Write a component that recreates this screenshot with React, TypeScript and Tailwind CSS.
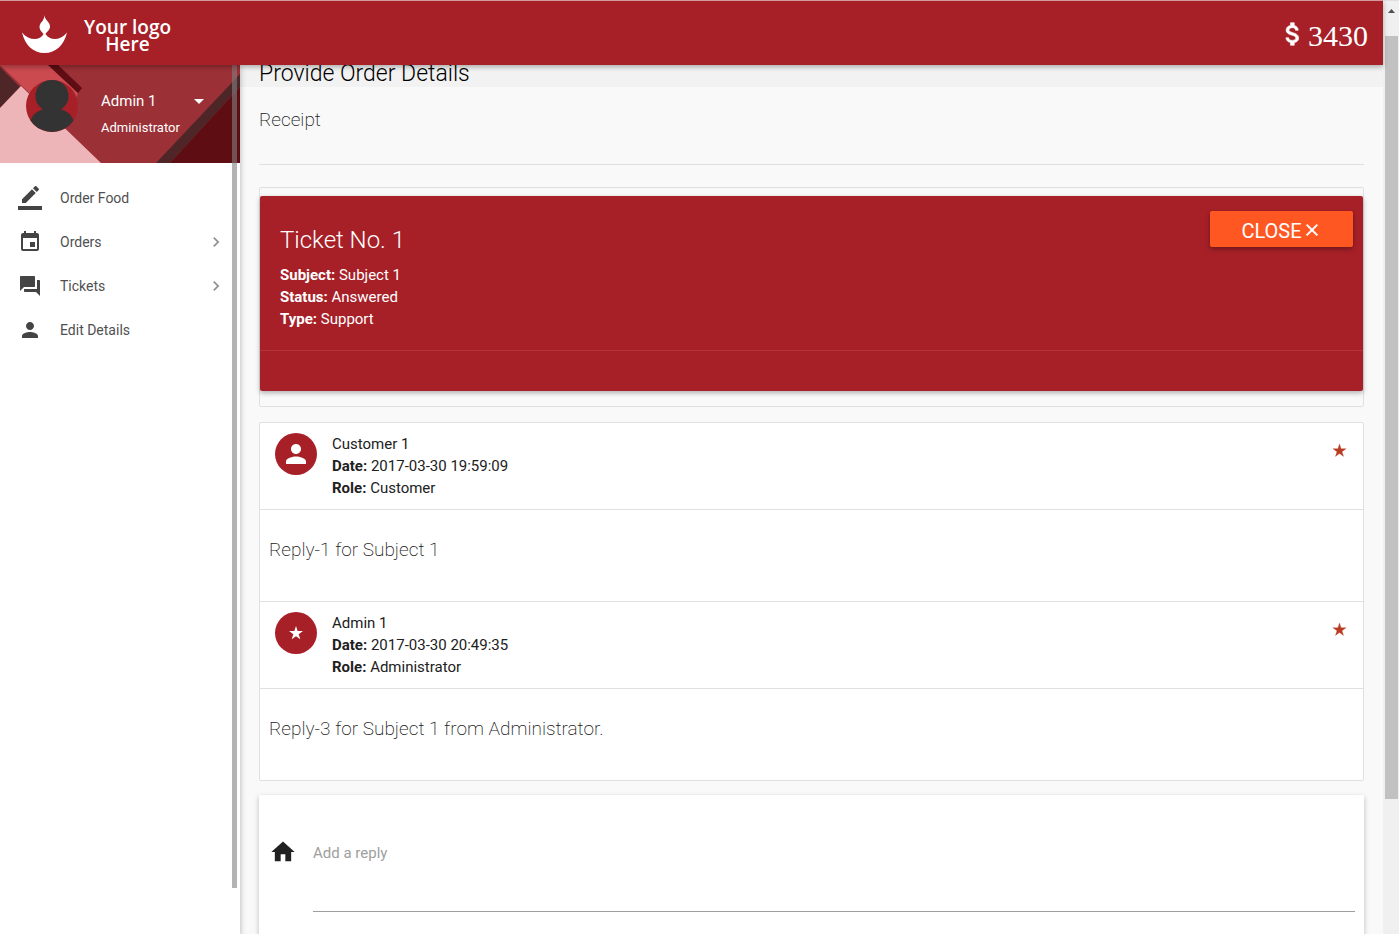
import React from "react";

const paths = {
  person:
    "M12 12c2.21 0 4-1.79 4-4s-1.79-4-4-4-4 1.79-4 4 1.79 4 4 4zm0 2c-2.67 0-8 1.34-8 4v2h16v-2c0-2.66-5.33-4-8-4z",
  pencil:
    "M17.75 7L14 3.25l-10 10V17h3.75l10-10zm2.96-2.96c.39-.39.39-1.02 0-1.41L18.37.29a.9959.9959 0 0 0-1.41 0L15 2.25 18.75 6l1.96-1.96zM0 20h24v4H0z",
  event:
    "M17 12h-5v5h5v-5zM16 1v2H8V1H6v2H5c-1.11 0-1.99.9-1.99 2L3 19a2 2 0 0 0 2 2h14c1.1 0 2-.9 2-2V5c0-1.1-.9-2-2-2h-1V1h-2zm3 18H5V8h14v11z",
  chat: "M21 6h-2v9H6v2c0 .55.45 1 1 1h11l4 4V7c0-.55-.45-1-1-1zm-4 6V3c0-.55-.45-1-1-1H3c-.55 0-1 .45-1 1v14l4-4h10c.55 0 1-.45 1-1z",
  home: "M10 20v-6h4v6h5v-8h3L12 3 2 12h3v8z",
  star: "M12 1.5L14.470 9.100H22.470L16 13.800L18.470 21.400L12 16.700L5.530 21.400L8 13.800L1.530 9.100H9.530Z",
  close:
    "M19 6.41L17.59 5 12 10.59 6.41 5 5 6.41 10.59 12 5 17.59 6.41 19 12 13.41 17.59 19 19 17.59 13.41 12z",
  chevron: "M10 6L8.59 7.41 13.17 12l-4.58 4.59L10 18l6-6z",
  caret: "M7 10l5 5 5-5z",
  money:
    "M11.8 10.9c-2.27-.59-3-1.2-3-2.15 0-1.09 1.01-1.85 2.7-1.85 1.78 0 2.44.85 2.5 2.1h2.21c-.07-1.72-1.12-3.3-3.21-3.81V3h-3v2.16c-1.94.42-3.5 1.68-3.5 3.61 0 2.31 1.91 3.46 4.7 4.13 2.5.6 3 1.48 3 2.41 0 .69-.49 1.79-2.7 1.79-2.06 0-2.87-.92-2.98-2.1h-2.2c.12 2.19 1.76 3.42 3.68 3.83V21h3v-2.15c1.95-.37 3.5-1.5 3.5-3.55 0-2.84-2.43-3.81-4.7-4.4z",
};

type IconName = keyof typeof paths;

function Icon({ name, className }: { name: IconName; className: string }) {
  return (
    <svg viewBox="0 0 24 24" fill="currentColor" aria-hidden="true" className={`shrink-0 ${className}`}>
      <path d={paths[name]} />
    </svg>
  );
}

function Header() {
  return (
    <header className="relative z-20 flex h-[65px] shrink-0 items-center justify-between border-t border-[#d59a9d] bg-[#a72028] pt-0.5 pr-[15px] pl-[22px] text-white shadow-[0_2px_5px_rgba(0,0,0,0.3)]">
      <a href="#home" className="flex items-center gap-4">
        <svg viewBox="0 0 46 38" fill="currentColor" aria-hidden="true" className="h-[38px] w-[46px]">
          <path d="M22 0C23 5 28 7 28 11.500C28 15 25 16.500 23.500 19C28 26 38 26 45 17.500C42 30 34 38 22.500 38C11 38 3 30 0 17.500C7 26 18 26 21.500 19C19.500 16.500 17.500 15 17.500 12C17.500 7 23 6 22 0Z" />
        </svg>
        <span className="pt-1 text-center font-['Open_Sans'] text-[19px] leading-[17px] font-semibold">
          Your logo
          <br />
          Here
        </span>
      </a>
      <div className="flex items-center">
        <Icon name="money" className="size-[30px] stroke-current stroke-[0.5]" />
        <span className="pt-[3px] font-['Liberation_Serif'] text-[30px] leading-8">3430</span>
      </div>
    </header>
  );
}

const menu: { label: string; icon: IconName; nested: boolean }[] = [
  { label: "Order Food", icon: "pencil", nested: false },
  { label: "Orders", icon: "event", nested: true },
  { label: "Tickets", icon: "chat", nested: true },
  { label: "Edit Details", icon: "person", nested: false },
];

function Sidebar() {
  return (
    <aside className="relative z-10 w-60 shrink-0 bg-white shadow-[0_2px_6px_rgba(0,0,0,0.3)]">
      <div className="relative h-[98px] overflow-hidden bg-[#9b3036]">
        <svg viewBox="0 0 240 98" preserveAspectRatio="none" aria-hidden="true" className="absolute inset-0 size-full">
          <path d="M0 0H48L78 28L66 63L22 21Z" fill="#cb4a50" />
          <path d="M0 2L20 22L0 43Z" fill="#4f2628" />
          <path d="M21 21L101 98H0V43Z" fill="#eeb5b9" />
          <path d="M48 0H58L82 23L78 28Z" fill="#5e0d13" />
          <path d="M240 9V22L170 98H156Z" fill="#4f2628" />
          <path d="M240 22V98H170Z" fill="#5e0d13" />
        </svg>
        <div className="relative flex pt-[15px] pl-[26px] text-white">
          <svg viewBox="0 0 52 52" aria-hidden="true" className="size-[52px]">
            <circle cx="26" cy="26" r="26" fill="#a72028" />
            <path
              d="M26 0C36 0 42.500 7 42.500 16C42.500 22 40 26 35 29.500C41 31 45 34 47.500 40.500A26 26 0 0 1 4.500 40.500C7 34 11 31 17 29.500C12 26 9.500 22 9.500 16C9.500 7 16 0 26 0Z"
              fill="#333333"
            />
          </svg>
          <div className="flex flex-col pt-[9px] pl-[23px]">
            <button type="button" className="flex h-6 items-center gap-[31px] text-[15px]">
              Admin 1
              <Icon name="caret" className="size-6" />
            </button>
            <span className="pt-[3px] text-[13px] leading-6">Administrator</span>
          </div>
        </div>
      </div>
      <nav className="pt-[13px]">
        {menu.map((item) => (
          <a
            key={item.label}
            href="#menu"
            className="flex h-11 items-center pr-[14px] pl-[18px] text-sm text-[#444444]"
          >
            <Icon name={item.icon} className="size-6" />
            <span className="flex-1 pl-[18px] text-[#505050]">{item.label}</span>
            {item.nested && <Icon name="chevron" className="size-5 text-[#909090]" />}
          </a>
        ))}
      </nav>
      <div className="absolute top-0 right-[3px] bottom-[46px] w-[5px] bg-[#808080]/60" />
    </aside>
  );
}

function Detail({ label, value }: { label: string; value: string }) {
  return (
    <p>
      <strong className="font-bold">{label}:</strong> {value}
    </p>
  );
}

function TicketCard() {
  return (
    <section className="rounded-xs border border-[#e0e0e0] pt-2 pb-[15px]">
      <div className="rounded-xs bg-[#a72028] text-white shadow-[0_2px_5px_rgba(0,0,0,0.3)]">
        <div className="flex items-start justify-between border-b border-[#b4363c] pr-[10px] pb-5 pl-5">
          <div className="pt-5 text-[15px] leading-[22px]">
            <h2 className="text-2xl leading-[48px] font-light">Ticket No. 1</h2>
            <Detail label="Subject" value="Subject 1" />
            <Detail label="Status" value="Answered" />
            <Detail label="Type" value="Support" />
          </div>
          <button
            type="button"
            className="mt-[15px] flex h-9 w-[143px] items-center justify-center rounded-xs bg-[#ff5722] pt-[3px] text-xl text-white shadow-[0_2px_5px_rgba(0,0,0,0.35)]"
          >
            CLOSE
            <Icon name="close" className="mb-0.5 size-5 stroke-current stroke-[0.5]" />
          </button>
        </div>
        <div className="h-10" />
      </div>
    </section>
  );
}

const replies: { name: string; date: string; role: string; icon: IconName; text: string }[] = [
  { name: "Customer 1", date: "2017-03-30 19:59:09", role: "Customer", icon: "person", text: "Reply-1 for Subject 1" },
  {
    name: "Admin 1",
    date: "2017-03-30 20:49:35",
    role: "Administrator",
    icon: "star",
    text: "Reply-3 for Subject 1 from Administrator.",
  },
];

function Replies() {
  return (
    <ul className="mt-[15px] divide-y divide-[#e0e0e0] rounded-xs border border-[#e0e0e0] bg-white">
      {replies.map((reply) => (
        <li key={reply.date}>
          <div className="flex border-b border-[#e0e0e0] py-[10px] pr-4 pl-[15px]">
            <span className="flex size-[42px] items-center justify-center rounded-full bg-[#a72028] text-white">
              <Icon name={reply.icon} className={reply.icon === "star" ? "size-4" : "size-[30px]"} />
            </span>
            <div className="flex-1 pl-[15px] text-[15px] leading-[22px]">
              <p>{reply.name}</p>
              <Detail label="Date" value={reply.date} />
              <Detail label="Role" value={reply.role} />
            </div>
            <a href="#star" aria-label="Star reply" className="pt-[10px] text-[#b93c22]">
              <Icon name="star" className="size-[15px] stroke-current stroke-[0.5]" />
            </a>
          </div>
          <p className="pt-7 pb-[39px] pl-[9px] text-[19px] leading-6 font-extralight">{reply.text}</p>
        </li>
      ))}
    </ul>
  );
}

function ReplyForm() {
  return (
    <form className="mt-[14px] flex min-h-[180px] bg-white pt-[43px] pr-[9px] pl-[10px] shadow-[0_2px_5px_rgba(0,0,0,0.25)]">
      <label htmlFor="reply" aria-label="Reply" className="h-7 w-11">
        <Icon name="home" className="size-7" />
      </label>
      <textarea
        id="reply"
        placeholder="Add a reply"
        className="h-[74px] flex-1 resize-none border-b border-[#9e9e9e] pt-1 text-[15px] leading-[22px] outline-none placeholder:text-[#9e9e9e]"
      />
    </form>
  );
}

export default function App() {
  return (
    <div className="flex h-screen overflow-hidden bg-[#f9f9f9] font-[Roboto,sans-serif] text-[#212121]">
      <div className="flex min-w-0 flex-1 flex-col">
        <Header />
        <div className="flex min-h-0 flex-1">
          <Sidebar />
          <main className="min-w-0 flex-1 overflow-hidden">
            <div className="h-[22px] bg-[#f2f2f2] px-[19px]">
              <h1 className="text-[23px] leading-[18px] font-light text-black">Provide Order Details</h1>
            </div>
            <div className="px-[19px]">
              <p className="mb-[22px] border-b border-[#e0e0e0] pt-[21px] pb-8 text-[19px] leading-6 font-extralight">
                Receipt
              </p>
              <TicketCard />
              <Replies />
              <ReplyForm />
            </div>
          </main>
        </div>
      </div>
      <div aria-hidden="true" className="flex w-4 shrink-0 flex-col items-center border-t border-[#e0e0e0] bg-[#f0f0f0]">
        <svg viewBox="0 0 7 4" className="mt-2 h-1 w-[7px]">
          <path d="M0 4L3.500 0L7 4Z" fill="#505050" />
        </svg>
        <div className="mt-[23px] h-[763px] w-[13px] bg-[#c1c1c1]" />
      </div>
    </div>
  );
}
